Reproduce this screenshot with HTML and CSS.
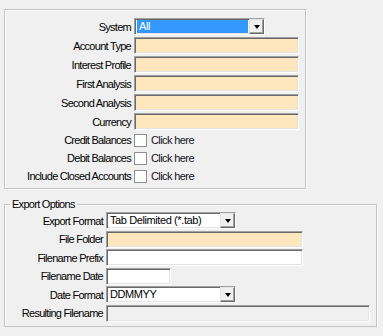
FILE: index.html
```html
<!DOCTYPE html>
<html lang="en">
<head>
    <meta charset="UTF-8">
    <title>Export Accounts</title>
    <link rel="stylesheet" href="styles.css">
</head>
<body>
  <div class="page">

    <div class="panel">
      <div class="row">
        <span class="lbl">System</span>
        <div class="field combo w-sys">
          <span class="val picked">All</span>
          <span class="btn"><i class="arrow"></i></span>
        </div>
      </div>
      <div class="row"><span class="lbl">Account Type</span><span class="field req w-long"></span></div>
      <div class="row"><span class="lbl">Interest Profile</span><span class="field req w-long"></span></div>
      <div class="row"><span class="lbl">First Analysis</span><span class="field req w-long"></span></div>
      <div class="row"><span class="lbl">Second Analysis</span><span class="field req w-long"></span></div>
      <div class="row"><span class="lbl">Currency</span><span class="field req w-long"></span></div>

      <div class="row check"><span class="lbl">Credit Balances</span><span class="box"></span><span class="hint">Click here</span></div>
      <div class="row check"><span class="lbl">Debit Balances</span><span class="box"></span><span class="hint">Click here</span></div>
      <div class="row check"><span class="lbl">Include Closed Accounts</span><span class="box"></span><span class="hint">Click here</span></div>
    </div>

    <fieldset class="group">
      <legend>Export Options</legend>
      <div class="row">
        <span class="lbl">Export Format</span>
        <div class="field combo w-fmt">
          <span class="val">Tab Delimited (*.tab)</span>
          <span class="btn"><i class="arrow"></i></span>
        </div>
      </div>
      <div class="row"><span class="lbl">File Folder</span><span class="field req w-path"></span></div>
      <div class="row"><span class="lbl">Filename Prefix</span><span class="field w-path"></span></div>
      <div class="row"><span class="lbl">Filename Date</span><span class="field w-date"></span></div>
      <div class="row">
        <span class="lbl">Date Format</span>
        <div class="field combo w-fmt">
          <span class="val">DDMMYY</span>
          <span class="btn"><i class="arrow"></i></span>
        </div>
      </div>
      <div class="row"><span class="lbl">Resulting Filename</span><span class="field off w-result"></span></div>
    </fieldset>

  </div>
</body>
</html>
```

FILE: styles.css
```css
body {
    margin: 0;
    background: #f0f0f0;
    color: #000;
    font-family: "Liberation Sans", Arial, sans-serif;
    font-size: 11px;
    letter-spacing: -0.72px;
}

.page {
    padding: 9px 0 0 4px;
}

/* group boxes */
.panel {
    width: 300px;
    border: 1px solid #c3c3c3;
    box-shadow: 1px 1px 0 #fff, inset 1px 1px 0 #fff;
    padding: 8px 0 4px;
    display: flex;
    flex-direction: column;
    gap: 2px;
}

.group {
    box-sizing: border-box;
    width: 373px;
    margin: 8px 0 0;
    padding: 1px 0 4px;
    border: 1px solid #c3c3c3;
    box-shadow: 1px 1px 0 #fff, inset 1px 1px 0 #fff;
    display: flex;
    flex-direction: column;
    gap: 1.6px;
}

.group legend {
    margin-left: 5px;
    padding: 0 2px;
    line-height: 14px;
}

.row {
    display: flex;
    align-items: center;
    height: 17px;
}

.row.check {
    height: 16px;
}

.lbl {
    width: 126px;
    margin-right: 3px;
    text-align: right;
    white-space: nowrap;
}

.group .lbl {
    width: 98px;
}

/* sunken edit boxes */
.field {
    box-sizing: border-box;
    height: 17px;
    border: 1px solid;
    border-color: #a0a0a0 #fff #fff #a0a0a0;
    box-shadow: inset 1px 1px 0 #696969, inset -1px -1px 0 #e3e3e3;
    background: #fff;
}

.req {
    background: #ffe7bd;
}

.off {
    background: #f0f0f0;
}

.w-sys { width: 131px; }
.w-long { width: 165px; }
.w-fmt { width: 130px; }
.w-path { width: 197px; }
.w-date { width: 65px; }
.w-result { width: 264px; }

/* drop down lists */
.combo {
    display: flex;
    padding: 1px 0 1px 1px;
}

.val {
    flex: 1;
    padding-left: 2px;
    line-height: 13px;
    white-space: nowrap;
    overflow: hidden;
    letter-spacing: -0.4px;
}

.val.picked {
    margin: 0 1px 0 1px;
    background: #3399ff;
    color: #fff;
}

.btn {
    box-sizing: border-box;
    width: 15px;
    margin-top: -1px;
    margin-bottom: -1px;
    background: #f0f0f0;
    border: 1px solid;
    border-color: #e3e3e3 #696969 #696969 #e3e3e3;
    box-shadow: inset -1px -1px 0 #a0a0a0;
    display: flex;
    align-items: center;
    justify-content: center;
}

.arrow {
    width: 0;
    height: 0;
    border-left: 3.5px solid transparent;
    border-right: 3.5px solid transparent;
    border-top: 4px solid #000;
}

/* check boxes */
.box {
    box-sizing: border-box;
    width: 13px;
    height: 13px;
    border: 1px solid #8f8f8f;
    background: #fff;
    margin-right: 4px;
}

.hint {
    color: #101020;
    letter-spacing: -0.6px;
}
```
